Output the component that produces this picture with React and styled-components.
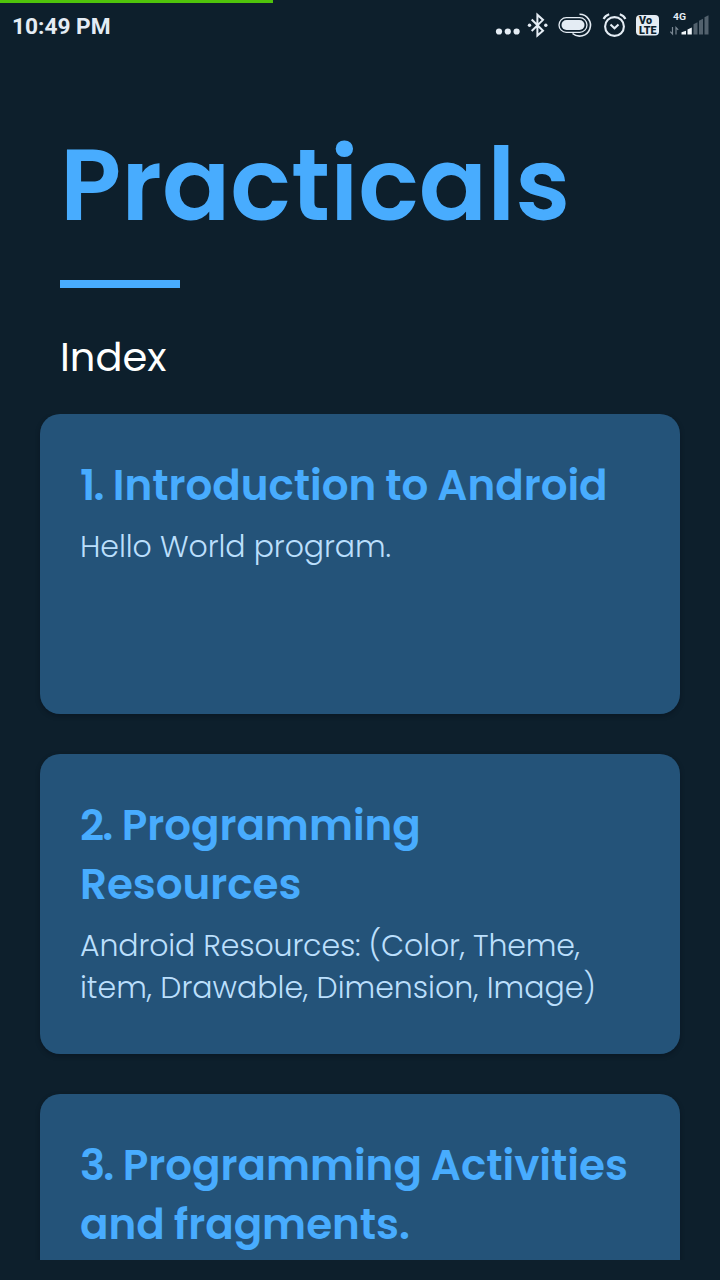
import React from 'react';
import styled, { createGlobalStyle } from 'styled-components';

const GlobalStyle = createGlobalStyle`
  *, *::before, *::after { box-sizing: border-box; }
  html, body { margin: 0; padding: 0; background: #0d1f2c; }
`;

const Screen = styled.div`
  display: flex;
  flex-direction: column;
  width: 720px;
  height: 1280px;
  padding-bottom: 20px;
  background: #0d1f2c;
  font-family: Poppins, Inter, 'Open Sans', sans-serif;
  overflow: hidden;
`;

const Progress = styled.div`
  flex: none;
  width: 273px;
  height: 3px;
  background: #4fc30b;
`;

const StatusBar = styled.div`
  display: flex;
  flex: none;
  justify-content: space-between;
  height: 47px;
  padding-left: 12px;
`;

const Clock = styled.time`
  padding-top: 10px;
  color: #e4ecf4;
  font: 700 22.7px/28px Roboto, sans-serif;
`;

const StatusIcons = styled.svg`
  display: block;
  width: 230px;
  height: 47px;
`;

const Header = styled.header`
  flex: none;
  height: 364px;
  padding: 75px 60px 0;
`;

const Title = styled.h1`
  margin: 0;
  color: #48acfe;
  font-size: 100.8px;
  font-weight: 600;
  line-height: 119px;
`;

const Rule = styled.div`
  width: 120px;
  height: 8px;
  margin-top: 36px;
  background: #48acfe;
`;

const Subtitle = styled.h2`
  margin: 39px 0 0;
  color: #fff;
  font-size: 40px;
  font-weight: 400;
  line-height: 60px;
`;

const CardList = styled.main`
  display: flex;
  flex: 1;
  flex-direction: column;
  gap: 40px;
  min-height: 0;
  padding: 0 40px;
  overflow: hidden;
`;

const Card = styled.article`
  flex: none;
  height: 300px;
  padding: 42px 40px;
  border-radius: 20px;
  background: #245379;
  box-shadow: 0 2px 5px rgba(0, 8, 16, 0.3);
`;

const Line = styled.span`
  display: block;
  width: max-content;
  white-space: nowrap;
  letter-spacing: ${({ $track }) => $track || 0}px;
`;

const CardTitle = styled.h3`
  margin: 0;
  color: #48acfe;
  font-size: 42px;
  font-weight: 600;
  line-height: 59px;
  word-spacing: -1px;
`;

const Ordinal = styled.span`
  margin-right: 3px;
  letter-spacing: -1.8px;
`;

const CardText = styled.p`
  margin: 11px 0 0;
  color: #bbdffc;
  font-size: 30px;
  font-weight: 300;
  line-height: 42px;
`;

const practicals = [
  {
    title: ['Introduction to Android'],
    text: [['Hello World program.', -0.06]],
  },
  {
    title: ['Programming', 'Resources'],
    text: [
      ['Android Resources: (Color, Theme,', -0.13],
      ['item, Drawable, Dimension, Image)', 0],
    ],
  },
  {
    title: ['Programming Activities', 'and fragments.'],
    text: [],
  },
];

const Icons = () => (
  <StatusIcons viewBox="490 3 230 47" fill="none" stroke="#e4ecf4">
    <g fill="#e4ecf4" stroke="none">
      <circle cx="499" cy="31.5" r="3.1" />
      <circle cx="507.8" cy="31.5" r="3.1" />
      <circle cx="516.6" cy="31.5" r="3.1" />
      <circle cx="529.5" cy="25.3" r="1.7" />
      <circle cx="545.8" cy="25.3" r="1.7" />
    </g>
    <path d="M531.7 19.5 543 30.7 537.4 35.6V14.8L543 19.9 531.7 31" strokeWidth="2" />
    <rect x="559" y="17.7" width="28" height="14.6" rx="7.3" strokeWidth="1.3" />
    <rect x="561.5" y="20" width="23" height="10" rx="5" fill="#e4ecf4" stroke="none" />
    <path d="M579.5 14.3A10.9 10.9 0 1 1 572.5 33.5" strokeWidth="1.6" />
    <circle cx="614.5" cy="26.5" r="9.4" strokeWidth="2.1" />
    <path d="m610.5 24.5 4 3.8 4-3.8M603.6 19q1.5-3.4 5.6-4.8M625.4 19q-1.5-3.4-5.6-4.8" strokeWidth="2.1" />
    <rect x="636" y="15" width="23" height="20.5" rx="4" fill="#e4ecf4" stroke="none" />
    <g stroke="none" fontFamily="Roboto, sans-serif" fontWeight="900">
      <text x="639" y="24" fontSize="10" textLength="13" lengthAdjust="spacingAndGlyphs" fill="#0d1f2c">Vo</text>
      <text x="639" y="33.5" fontSize="10.5" textLength="17.5" lengthAdjust="spacingAndGlyphs" fill="#0d1f2c">LTE</text>
      <text x="673" y="20" fontSize="9.8" fontWeight="700" textLength="13" lengthAdjust="spacingAndGlyphs" fill="#e4ecf4">4G</text>
    </g>
    <path d="M672.5 27v7l-2.2-2.4M676 34.5v-7l2.2 2.4" stroke="#7b8894" strokeWidth="1.2" />
    <g stroke="none">
      <path d="M681.5 34.5v-2.2l4.5-1.5v3.7zM687.5 34.5v-5l4.3-2v7z" fill="#f0f5f9" />
      <path d="M693.5 34.5V24.3l4-2v12.2zM699 34.5V20.8l4-2v15.7zM704.5 34.5V17.3l4-2v19.2z" fill="#52616d" />
    </g>
  </StatusIcons>
);

export default function App() {
  return (
    <>
      <GlobalStyle />
      <Screen>
        <Progress />
        <StatusBar>
          <Clock>10:49 PM</Clock>
          <Icons />
        </StatusBar>
        <Header>
          <Title>Practicals</Title>
          <Rule />
          <Subtitle>Index</Subtitle>
        </Header>
        <CardList>
          {practicals.map(({ title, text }, index) => (
            <Card key={title[0]}>
              <CardTitle>
                {title.map((line, row) => (
                  <Line key={line}>
                    {row === 0 && <Ordinal>{index + 1}. </Ordinal>}
                    {line}
                  </Line>
                ))}
              </CardTitle>
              {text.length > 0 && (
                <CardText>
                  {text.map(([line, track]) => (
                    <Line key={line} $track={track}>{line}</Line>
                  ))}
                </CardText>
              )}
            </Card>
          ))}
        </CardList>
      </Screen>
    </>
  );
}
